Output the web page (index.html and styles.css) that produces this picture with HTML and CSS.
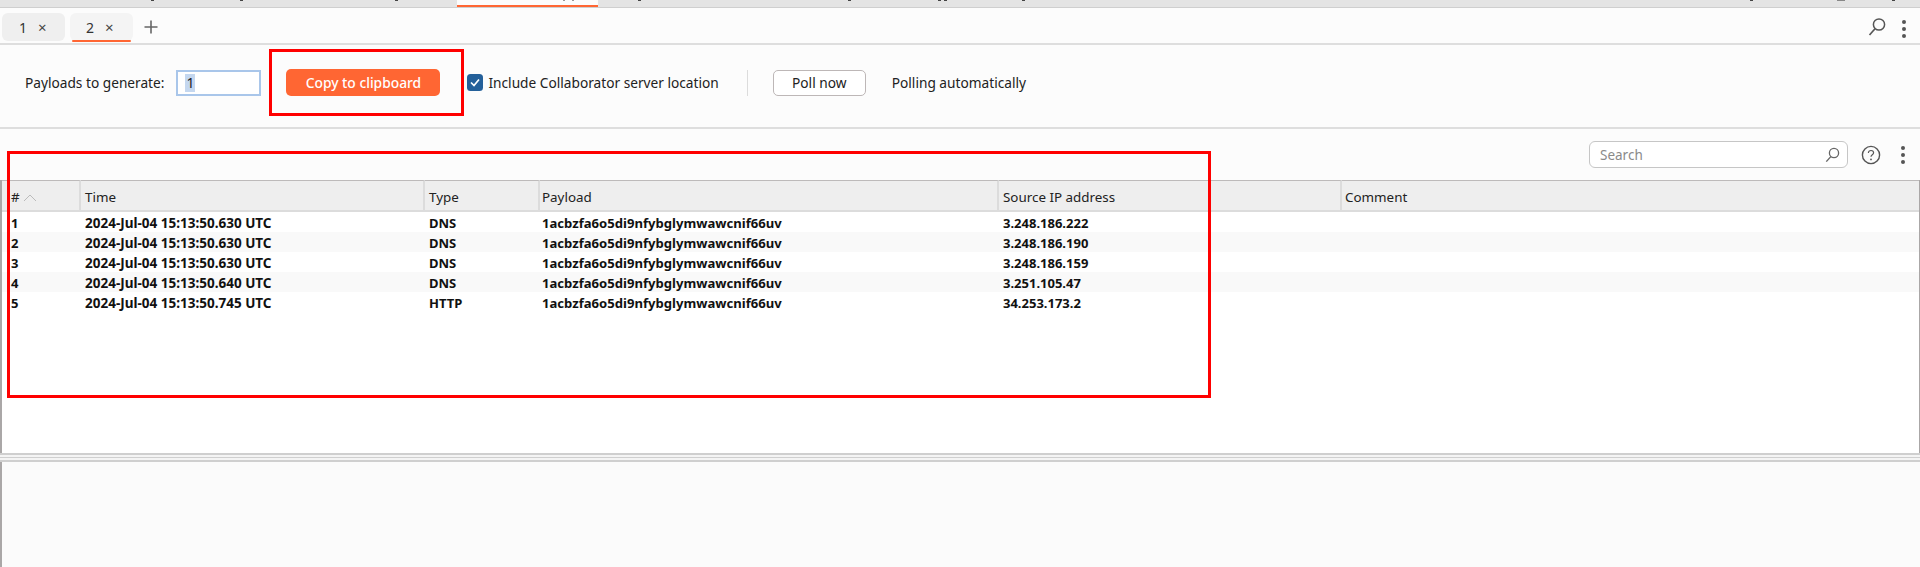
FILE: index.html
```html
<!DOCTYPE html>
<html lang="en">
<head>
<meta charset="utf-8">
<title>Collaborator</title>
<link rel="stylesheet" href="styles.css">
</head>
<body>
<div class="page">
  <nav class="main-tabs">
    <i class="tick"></i><i class="tick"></i><i class="tick"></i>
    <span class="mt-active"><i class="tick"></i><i class="tick"></i></span>
    <i class="tick"></i><i class="tick"></i><i class="tick"></i><i class="tick"></i>
    <i class="tick"></i><i class="tick"></i><i class="tick"></i><i class="tick"></i>
  </nav>
  <div class="sub-tabs">
    <div class="sub-tab"><span>1</span><span class="close">×</span></div>
    <div class="sub-tab selected"><span>2</span><span class="close">×</span></div>
    <svg class="plus" width="14" height="14" viewBox="0 0 14 14"><path d="M7 0.5v13M0.5 7h13" stroke="#666" stroke-width="1.6" fill="none"/></svg>
    <div class="spacer"></div>
    <svg class="search-big" width="18" height="20" viewBox="0 0 18 20"><circle cx="11" cy="7.5" r="5.6" fill="none" stroke="#555" stroke-width="1.5"/><path d="M7 11.7L1.5 18" stroke="#555" stroke-width="1.7" fill="none"/></svg>
    <div class="dots"><i></i><i></i><i></i></div>
  </div>
  <div class="toolbar">
    <label class="lbl">Payloads to generate:</label>
    <div class="num"><span class="sel">1</span></div>
    <button class="primary">Copy to clipboard</button>
    <span class="check"><svg width="16" height="17" viewBox="0 0 16 17"><rect x="0" y="0" width="16" height="17" rx="3.5" fill="#24609a"/><path d="M4 8.5l3 3 5-6" stroke="#fff" stroke-width="1.7" fill="none"/></svg></span>
    <span class="lbl include">Include Collaborator server location</span>
    <span class="vsep"></span>
    <button class="plain">Poll now</button>
    <span class="lbl polling">Polling automatically</span>
  </div>
  <div class="filter">
    <div class="searchbox">
      <span>Search</span>
      <svg width="15" height="16" viewBox="0 0 15 16"><circle cx="9" cy="6" r="4.6" fill="none" stroke="#666" stroke-width="1.3"/><path d="M5.8 9.6L1.3 14.6" stroke="#666" stroke-width="1.4" fill="none"/></svg>
    </div>
    <svg class="help" width="20" height="20" viewBox="0 0 20 20"><circle cx="10" cy="10" r="8.6" fill="none" stroke="#555" stroke-width="1.4"/><path d="M7.4 8c0-1.6 1.2-2.5 2.6-2.5s2.6 1 2.6 2.3c0 1.9-2.6 2-2.6 4" fill="none" stroke="#555" stroke-width="1.2"/><circle cx="10" cy="14.4" r="0.9" fill="#555"/></svg>
    <div class="dots"><i></i><i></i><i></i></div>
  </div>
  <div class="table-pane">
    <table>
      <colgroup>
        <col class="c-id"><col class="c-time"><col class="c-type"><col class="c-payload"><col class="c-ip"><col>
      </colgroup>
      <thead>
        <tr>
          <th class="first"># <svg width="14" height="8" viewBox="0 0 14 8"><path d="M1 7l6-6 6 6" fill="none" stroke="#bbb" stroke-width="1"/></svg></th>
          <th>Time</th><th>Type</th><th class="pay-h">Payload</th><th>Source IP address</th><th class="com-h">Comment</th>
        </tr>
      </thead>
      <tbody>
        <tr><td class="first">1</td><td class="when">2024-Jul-04 15:13:50.630 UTC</td><td>DNS</td><td class="pay">1acbzfa6o5di9nfybglymwawcnif66uv</td><td>3.248.186.222</td><td></td></tr>
        <tr><td class="first">2</td><td class="when">2024-Jul-04 15:13:50.630 UTC</td><td>DNS</td><td class="pay">1acbzfa6o5di9nfybglymwawcnif66uv</td><td>3.248.186.190</td><td></td></tr>
        <tr><td class="first">3</td><td class="when">2024-Jul-04 15:13:50.630 UTC</td><td>DNS</td><td class="pay">1acbzfa6o5di9nfybglymwawcnif66uv</td><td>3.248.186.159</td><td></td></tr>
        <tr><td class="first">4</td><td class="when">2024-Jul-04 15:13:50.640 UTC</td><td>DNS</td><td class="pay">1acbzfa6o5di9nfybglymwawcnif66uv</td><td>3.251.105.47</td><td></td></tr>
        <tr><td class="first">5</td><td class="when">2024-Jul-04 15:13:50.745 UTC</td><td>HTTP</td><td class="pay">1acbzfa6o5di9nfybglymwawcnif66uv</td><td>34.253.173.2</td><td></td></tr>
      </tbody>
    </table>
  </div>
  <div class="splitter"></div>
  <div class="detail"></div>
  <div class="mark mark-button"></div>
  <div class="mark mark-table"></div>
</div>
</body>
</html>
```
FILE: styles.css
```css
* { box-sizing: border-box; }
html, body { margin: 0; padding: 0; }
body { background: #fbfbfb; font-family: "Noto Sans", sans-serif; font-size: 13px; color: #222; }
.page { position: relative; width: 1920px; height: 567px; overflow: hidden; display: flex; flex-direction: column; }

.main-tabs { height: 8px; flex: none; display: flex; align-items: flex-start; background: #e4e4e4; border-bottom: 1px solid #cfcfcf; overflow: hidden; }
.tick { display: block; flex: none; width: 3px; height: 1px; background: #444; }
.tick:nth-child(1) { margin-left: 151px; }
.tick:nth-child(2) { margin-left: 86px; }
.tick:nth-child(3) { margin-left: 152px; }
.mt-active { flex: none; display: flex; width: 141px; height: 7px; margin-left: 59px; background: #fcfcfc; border-bottom: 2px solid #ff6633; }
.mt-active .tick { width: 2px; background: #999; }
.mt-active .tick:nth-child(1) { margin-left: 106px; }
.mt-active .tick:nth-child(2) { margin-left: 7px; }
.tick:nth-child(5) { margin-left: 40px; }
.tick:nth-child(6) { margin-left: 207px; }
.tick:nth-child(7) { margin-left: 87px; }
.tick:nth-child(8) { margin-left: 3px; }
.tick:nth-child(9) { margin-left: 75px; }
.tick:nth-child(10) { margin-left: 725px; }
.tick:nth-child(11) { margin-left: 84px; width: 8px; background: #888; }
.tick:nth-child(12) { margin-left: 47px; }

.sub-tabs { height: 37px; flex: none; display: flex; align-items: flex-start; background: #fcfcfc; border-bottom: 2px solid #dedede; padding: 5px 0 0 2px; }
.sub-tab { width: 63px; height: 28px; margin-right: 5px; border-radius: 6px; background: #efefef; display: flex; align-items: center; padding-left: 17px; gap: 11px; font-size: 14px; color: #333; position: relative; }
.sub-tab .close { font-size: 15px; color: #444; }
.sub-tab.selected { background: #f4f4f4; padding-left: 16px; }
.sub-tab.selected::after { content: ""; position: absolute; left: 2px; right: 2px; bottom: -1px; height: 2px; background: #ff6633; border-radius: 1px; }
.plus { margin: 7px 0 0 6px; }
.spacer { flex: 1; }
.search-big { margin: 4px 16px 0 0; }
.sub-tabs .dots { margin: 7px 14px 0 0; }
.dots { display: flex; flex-direction: column; gap: 3px; width: 4px; }
.dots i { width: 4px; height: 4px; border-radius: 50%; background: #555; }

.toolbar { height: 84px; flex: none; display: flex; align-items: center; background: #fcfcfc; border-bottom: 2px solid #dedede; padding: 0 0 7px 25px; }
.lbl { font-size: 13.7px; color: #222; white-space: nowrap; }
.num { width: 85px; height: 26px; margin-left: 12px; border: 2px solid #a9c6ea; background: #fff; padding-left: 7px; line-height: 22px; font-size: 14px; }
.sel { background: #c4d7ef; display: inline-block; line-height: 18px; padding: 0 1px; color: #222; }
.primary { width: 154px; height: 27px; margin-left: 25px; border: 0; border-radius: 5px; background: #ff6633; color: #fff; font: 500 13.8px "Noto Sans", sans-serif; padding: 0; }
.check { display: flex; margin-left: 27px; }
.include { margin-left: 5px; }
.vsep { width: 1px; height: 26px; background: #dcdcdc; margin-left: 28px; }
.plain { width: 93px; height: 26px; margin-left: 25px; border: 1px solid #bdb7b7; border-radius: 5px; background: #fff; color: #222; font: 13.7px "Noto Sans", sans-serif; padding: 0; }
.polling { margin-left: 26px; }

.filter { height: 51px; flex: none; display: flex; align-items: center; justify-content: flex-end; background: #fcfcfc; padding: 0 15px 0 0; }
.searchbox { width: 259px; height: 27px; border: 1px solid #c6c6c6; border-radius: 6px; background: #fff; display: flex; align-items: center; justify-content: space-between; padding: 0 7px 0 10px; color: #8a8a8a; font-size: 13.5px; }
.help { margin-left: 13px; }
.filter .dots { margin-left: 20px; }

.table-pane { height: 273px; flex: none; background: #fff; border-left: 2px solid #aaa7a7; border-right: 1px solid #aaa7a7; }
table { width: 100%; border-collapse: separate; border-spacing: 0; table-layout: fixed; font-size: 13px; }
.c-id { width: 79px; }
.c-time { width: 344px; }
.c-type { width: 115px; }
.c-payload { width: 459px; }
.c-ip { width: 343px; }
th { height: 32px; padding: 3px 0 0 4px; background: #eeeeee; border-top: 1px solid #bdbaba; border-bottom: 2px solid #dcdcdc; border-right: 2px solid #dcdcdc; text-align: left; font-weight: 400; font-size: 13.4px; color: #222; white-space: nowrap; }
th:last-child { border-right: 0; }
.pay-h { padding-left: 2px; }
.com-h { padding-left: 3px; }
td { height: 20px; padding: 2px 0 0 4px; font-weight: 700; color: #111; white-space: nowrap; line-height: 18px; }
.when { font-size: 13.5px; }
td.pay { padding-left: 2px; font-size: 13.1px; }
.first { padding-left: 9px; }
tbody tr:nth-child(even) td { background: #f9f9f9; }

.splitter { height: 9px; flex: none; border-top: 2px solid #cfcfcf; border-bottom: 2px solid #cfcfcf; background: #f4f4f4; position: relative; }
.splitter::after { content: ""; position: absolute; left: 0; right: 0; top: 2px; height: 1px; background: #cfcfcf; }
.detail { flex: 1; background: #fbfbfb; border-left: 2px solid #aaa7a7; }

.mark { position: absolute; border: 3px solid #f00; }
.mark-button { left: 269px; top: 49px; width: 195px; height: 67px; }
.mark-table { left: 7px; top: 151px; width: 1204px; height: 247px; }
```
